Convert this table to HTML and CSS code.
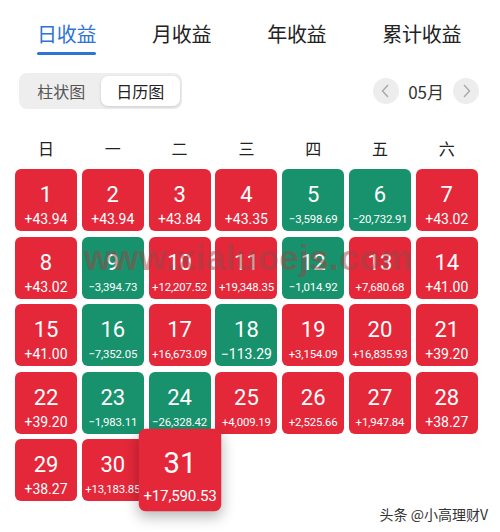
FILE: index.html
```html
<!DOCTYPE html>
<html lang="zh">
<head>
<meta charset="utf-8">
<link rel="stylesheet" href="styles.css">
</head>
<body>
<div class="page">
  <nav class="tabs">
    <div class="tab active">日收益</div>
    <div class="tab">月收益</div>
    <div class="tab">年收益</div>
    <div class="tab">累计收益</div>
  </nav>
  <div class="toolbar">
    <div class="seg">
      <div class="seg-item">柱状图</div>
      <div class="seg-item on">日历图</div>
    </div>
    <div class="month">
      <span class="arrow"><svg width="26" height="26" viewBox="0 0 26 26"><path d="M15 7 L9.5 13 L15 19" fill="none" stroke="#a8a8a8" stroke-width="1.4"/></svg></span>
      <span class="mlabel">05月</span>
      <span class="arrow"><svg width="26" height="26" viewBox="0 0 26 26"><path d="M11 7 L16.5 13 L11 19" fill="none" stroke="#a8a8a8" stroke-width="1.4"/></svg></span>
    </div>
  </div>
  <div class="weekdays">
    <span>日</span><span>一</span><span>二</span><span>三</span><span>四</span><span>五</span><span>六</span>
  </div>
  <div class="grid">
    <div class="cell up"><b>1</b><i>+43.94</i></div>
    <div class="cell up"><b>2</b><i>+43.94</i></div>
    <div class="cell up"><b>3</b><i>+43.84</i></div>
    <div class="cell up"><b>4</b><i>+43.35</i></div>
    <div class="cell down"><b>5</b><i class="s">−3,598.69</i></div>
    <div class="cell down"><b>6</b><i class="s">−20,732.91</i></div>
    <div class="cell up"><b>7</b><i>+43.02</i></div>
    <div class="cell up"><b>8</b><i>+43.02</i></div>
    <div class="cell down"><b>9</b><i class="s">−3,394.73</i></div>
    <div class="cell up"><b>10</b><i class="s">+12,207.52</i></div>
    <div class="cell up"><b>11</b><i class="s">+19,348.35</i></div>
    <div class="cell down"><b>12</b><i class="s">−1,014.92</i></div>
    <div class="cell up"><b>13</b><i class="s">+7,680.68</i></div>
    <div class="cell up"><b>14</b><i>+41.00</i></div>
    <div class="cell up"><b>15</b><i>+41.00</i></div>
    <div class="cell down"><b>16</b><i class="s">−7,352.05</i></div>
    <div class="cell up"><b>17</b><i class="s">+16,673.09</i></div>
    <div class="cell down"><b>18</b><i>−113.29</i></div>
    <div class="cell up"><b>19</b><i class="s">+3,154.09</i></div>
    <div class="cell up"><b>20</b><i class="s">+16,835.93</i></div>
    <div class="cell up"><b>21</b><i>+39.20</i></div>
    <div class="cell up"><b>22</b><i>+39.20</i></div>
    <div class="cell down"><b>23</b><i class="s">−1,983.11</i></div>
    <div class="cell down"><b>24</b><i class="s">−26,328.42</i></div>
    <div class="cell up"><b>25</b><i class="s">+4,009.19</i></div>
    <div class="cell up"><b>26</b><i class="s">+2,525.66</i></div>
    <div class="cell up"><b>27</b><i class="s">+1,947.84</i></div>
    <div class="cell up"><b>28</b><i>+38.27</i></div>
    <div class="cell up"><b>29</b><i>+38.27</i></div>
    <div class="cell up"><b>30</b><i class="s">+13,183.85</i></div>
    <div class="cell up big"><b>31</b><i class="s">+17,590.53</i></div>
  </div>
  <div class="watermark">www.xialuoejs.com</div>
  <div class="credit">头条 @小高理财V</div>
</div>
</body>
</html>
```
FILE: styles.css
```css
* { box-sizing: border-box; }
html, body { margin: 0; padding: 0; background: #fff; }
body {
  width: 500px;
  height: 532px;
  overflow: hidden;
  font-family: "Noto Sans CJK SC", "Noto Sans", sans-serif;
  color: #222;
}
.page { position: relative; width: 500px; height: 532px; }

.tabs {
  display: flex;
  gap: 56px;
  padding: 19px 0 0 37px;
  height: 56px;
}
.tab {
  font-size: 20px;
  line-height: 30px;
  height: 36px;
  color: #222;
  position: relative;
  letter-spacing: -0.3px;
}
.tab.active { color: #2e74d2; }
.tab.active::after {
  content: "";
  position: absolute;
  left: 0; right: 0;
  bottom: 0;
  height: 3px;
  border-radius: 2px;
  background: #2e74d2;
}

.toolbar {
  display: flex;
  justify-content: space-between;
  align-items: center;
  padding: 0 21px 0 19px;
  margin-top: 17px;
}
.seg {
  display: flex;
  align-items: center;
  background: #eeeeee;
  border-radius: 8px;
  padding: 3px 2px 3px 3px;
  width: 163px;
  height: 36px;
}
.seg-item {
  font-size: 16px;
  color: #555;
  width: 79px;
  text-align: center;
  line-height: 30px;
}
.seg-item.on {
  background: #fff;
  color: #222;
  border-radius: 7px;
  width: 80px;
  box-shadow: 0 1px 3px rgba(0,0,0,0.15);
}
.month { display: flex; align-items: center; }
.arrow {
  width: 26px; height: 26px;
  border-radius: 50%;
  background: #ededed;
  display: flex;
}
.mlabel {
  font-size: 17px;
  color: #333;
  padding: 0 9px;
}

.weekdays {
  display: grid;
  grid-template-columns: repeat(7, 62px);
  column-gap: 4.8px;
  padding-left: 15px;
  margin-top: 28px;
  font-size: 16px;
  line-height: 22px;
}
.weekdays span { text-align: center; }

.grid {
  display: grid;
  grid-template-columns: repeat(7, 62px);
  grid-auto-rows: 62px;
  column-gap: 4.8px;
  row-gap: 5.6px;
  padding-left: 15px;
  margin-top: 10px;
}
.cell {
  border-radius: 6px;
  color: #fff;
  display: flex;
  flex-direction: column;
  align-items: center;
  font-family: "Roboto", "Liberation Sans", sans-serif;
}
.cell.up { background: #e4283a; }
.cell.down { background: #17926c; }
.cell b {
  font-weight: 400;
  font-size: 22px;
  line-height: 26px;
  margin-top: 13px;
}
.cell i {
  font-style: normal;
  font-size: 14px;
  line-height: 16px;
  margin-top: 3px;
}
.cell i.s {
  font-size: 11.4px;
  letter-spacing: -0.15px;
}
.cell.big {
  position: relative;
  z-index: 2;
  transform: scale(1.33);
  box-shadow: 0 4px 10px rgba(0,0,0,0.28);
  border-radius: 5px;
}

.watermark {
  position: absolute;
  left: 84px;
  top: 238px;
  font-family: "Liberation Sans", sans-serif;
  font-size: 35px;
  font-weight: 700;
  letter-spacing: 0.4px;
  color: rgba(150, 70, 70, 0.5);
  pointer-events: none;
}
.credit {
  position: absolute;
  right: 12px;
  bottom: 8px;
  font-size: 14px;
  color: #333;
  text-shadow: 0 0 2px #fff;
}
```
